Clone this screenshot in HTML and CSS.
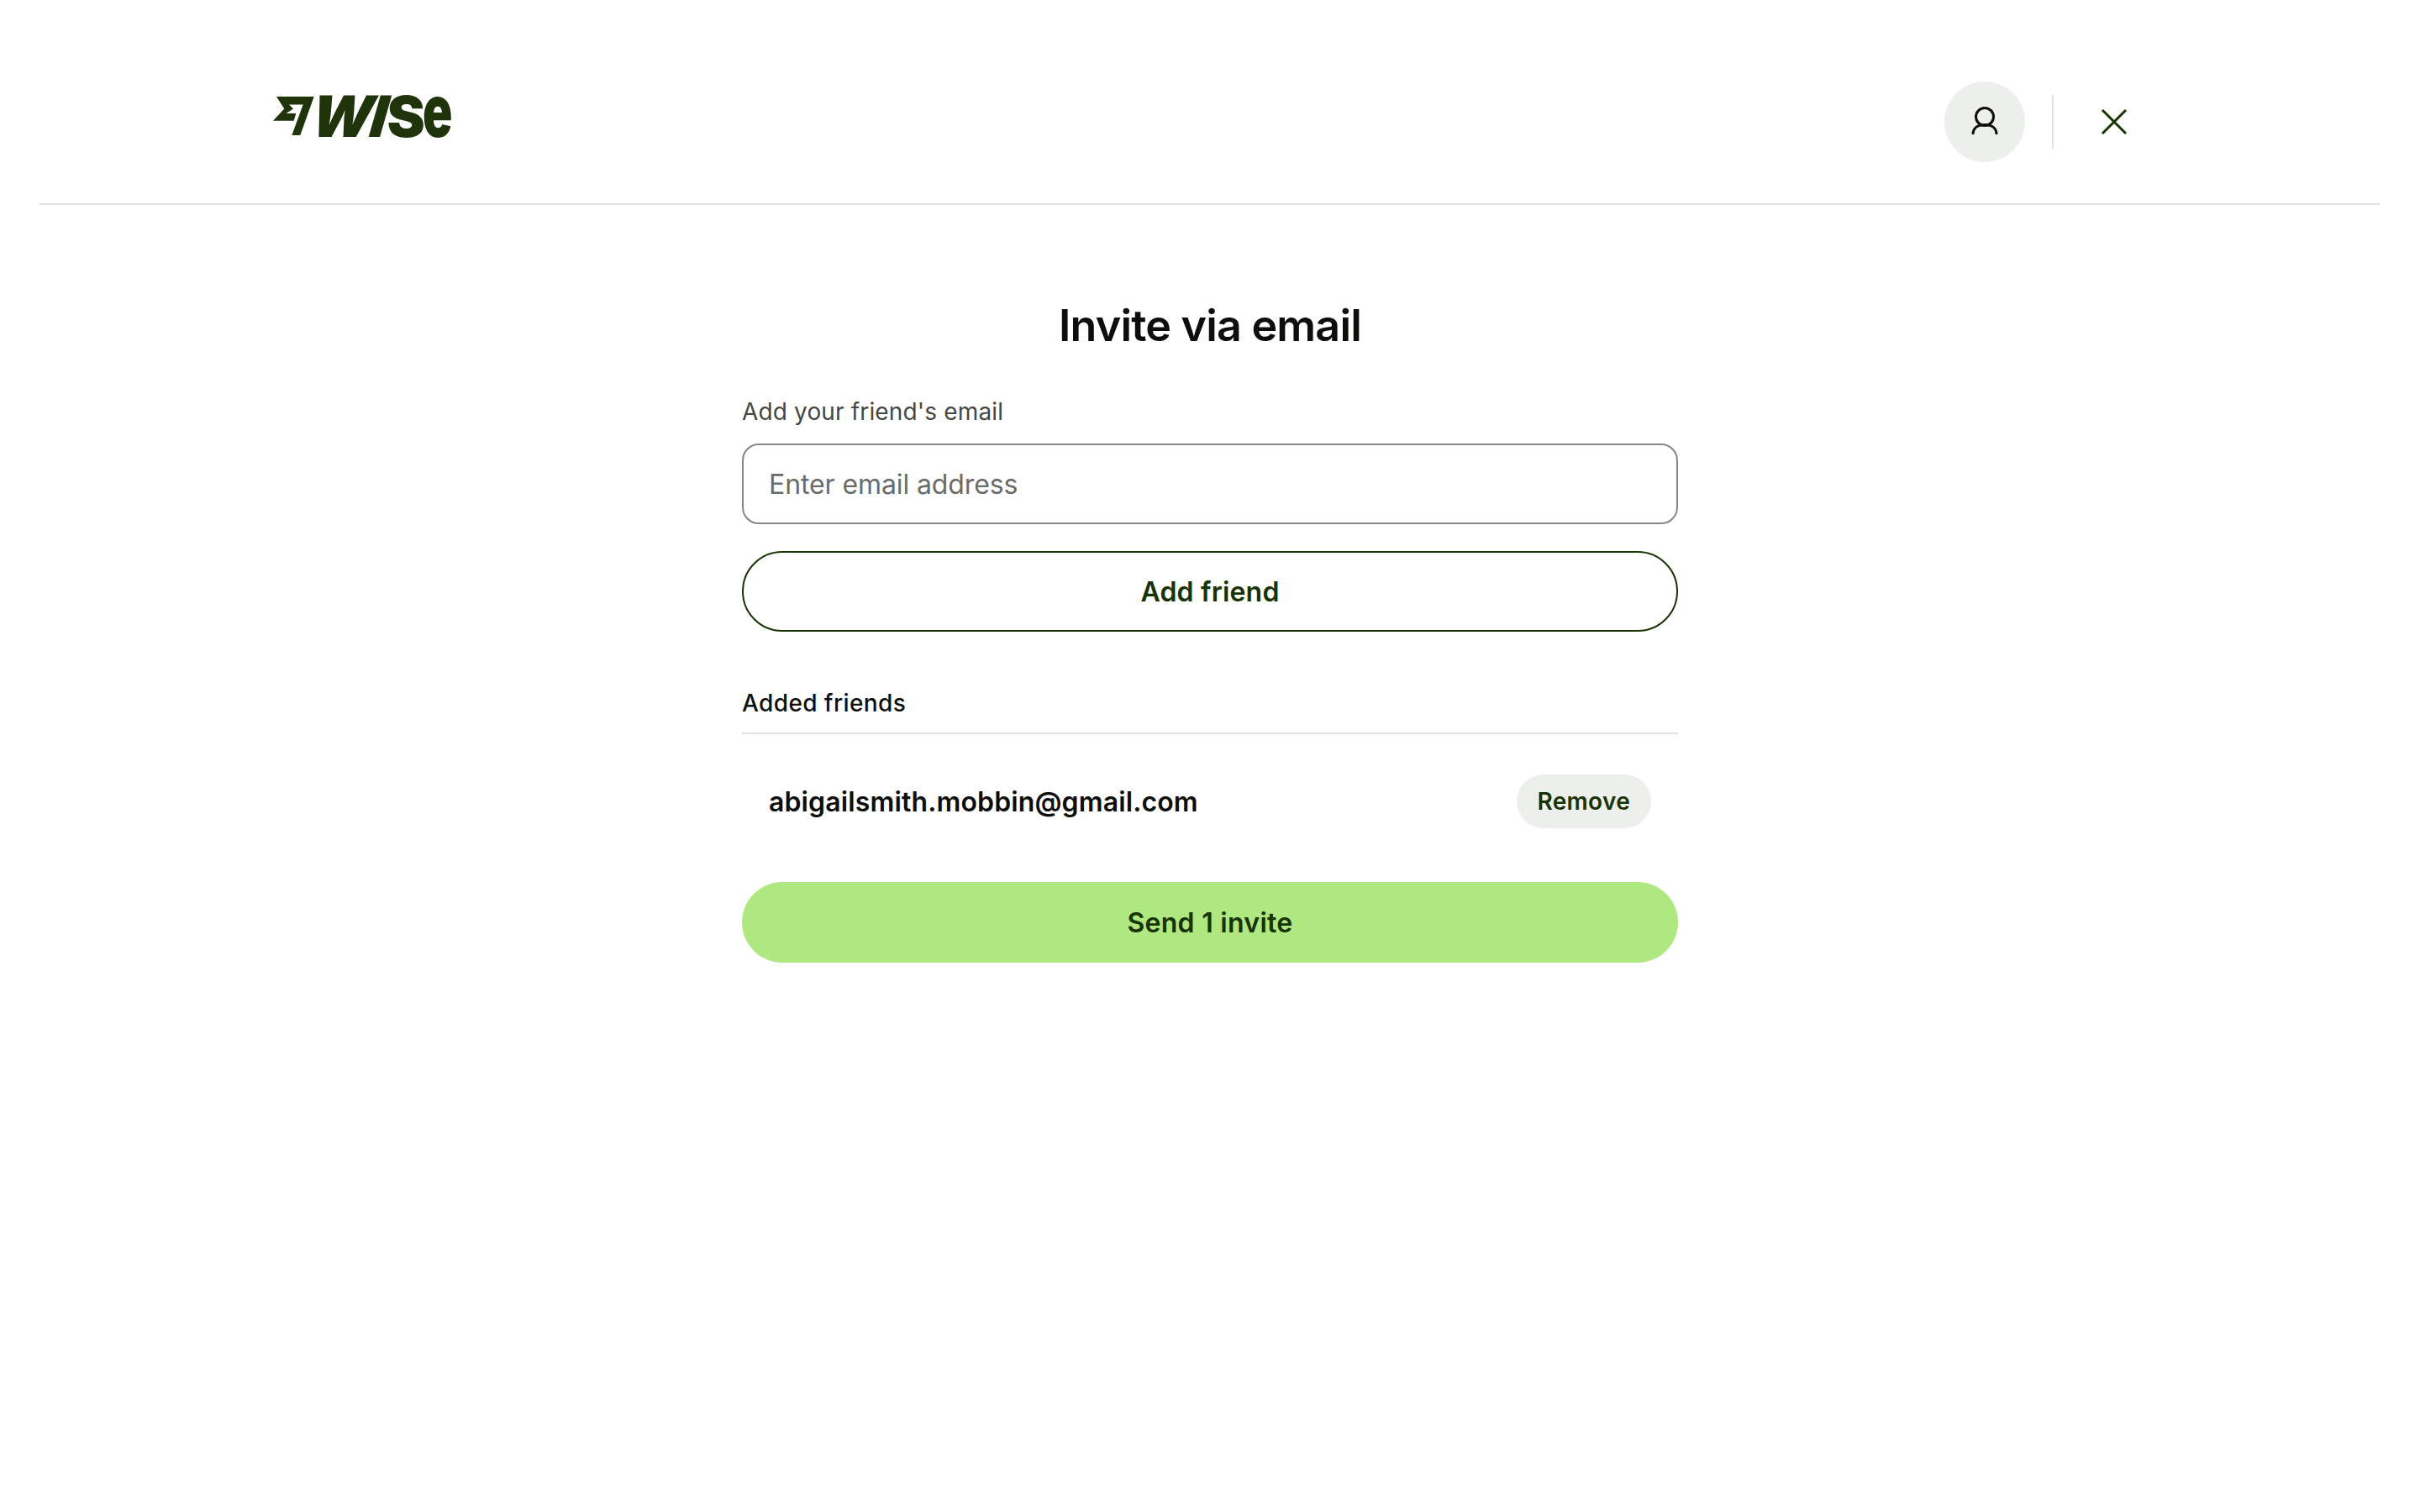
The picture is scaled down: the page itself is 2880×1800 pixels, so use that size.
FILE: index.html
```html
<!DOCTYPE html>
<html lang="en">
<head>
    <meta charset="UTF-8">
    <meta name="viewport" content="width=device-width, initial-scale=1.0">
    <title>Invite via email</title>
    <link rel="stylesheet" href="styles.css">
</head>
<body>
    <header class="topbar">
        <a class="logo" href="#">
            <svg class="logo-flag" width="49" height="46" viewBox="0 0 49 46">
                <path d="M4 0H48.7L32.3 46H22.3L35.7 9.4H19L24 14.4L15.7 20H27.3L24.7 28.7H0L13.3 14.4Z" fill="#1f340b"/>
            </svg>
            <span class="logo-text"><span class="logo-slant">WI</span>S<span class="logo-e">e</span></span>
        </a>
        <div class="topbar-actions">
            <button class="avatar" aria-label="Account">
                <svg width="36" height="36" viewBox="0 0 36 36" fill="none" stroke="#0e0f0c" stroke-width="3">
                    <circle cx="18" cy="12" r="10.5"/>
                    <path d="M4 33C4 25 10 21.5 18 21.5S32 25 32 33"/>
                </svg>
            </button>
            <span class="divider"></span>
            <button class="close" aria-label="Close">
                <svg width="32" height="32" viewBox="0 0 32 32" stroke="#163300" stroke-width="3">
                    <path d="M2 2L30 30M30 2L2 30"/>
                </svg>
            </button>
        </div>
    </header>

    <main class="invite">
        <h1>Invite via email</h1>

        <label class="field-label" for="email">Add your friend's email</label>
        <input class="email-input" type="email" id="email" placeholder="Enter email address">
        <button class="btn btn-outline">Add friend</button>

        <h2 class="friends-title">Added friends</h2>
        <div class="friend-row">
            <span class="friend-email">abigailsmith.mobbin@gmail.com</span>
            <button class="btn-remove">Remove</button>
        </div>

        <button class="btn btn-send">Send 1 invite</button>
    </main>
</body>
</html>
```

FILE: styles.css
```css
body {
    margin: 0;
    background-color: #fff;
    font-family: Inter, "Noto Sans", sans-serif;
    color: #0e0f0c;
}
button {
    font-family: inherit;
    cursor: pointer;
}
.topbar {
    display: flex;
    justify-content: space-between;
    align-items: flex-start;
    margin: 0 48px 0 47px;
    padding: 97px 300px 49px 278px;
    border-bottom: 2px solid #e2e3e1;
}
.logo {
    display: flex;
    align-items: center;
    gap: 0;
    margin-top: 18px;
    height: 46px;
    text-decoration: none;
}
.logo-flag {
    display: block;
}
.logo-text {
    display: flex;
    align-items: baseline;
    margin-top: -7px;
    font-size: 68px;
    line-height: 46px;
    font-weight: 900;
    letter-spacing: -3px;
    color: #1f340b;
}
.logo-slant {
    display: inline-block;
    transform: skewX(-16deg);
    letter-spacing: -3px;
    margin-left: -2px;
    margin-right: 1px;
}
.logo-e {
    display: inline-block;
    font-size: 86px;
    transform: scaleX(0.68);
    transform-origin: left;
    margin-right: -16px;
}
.topbar-actions {
    display: flex;
    align-items: center;
}
.avatar {
    display: flex;
    align-items: center;
    justify-content: center;
    width: 96px;
    height: 96px;
    padding: 0;
    border: none;
    border-radius: 50%;
    background-color: #edefec;
}
.divider {
    width: 2px;
    height: 64px;
    margin: 0 56px 0 32px;
    background-color: #e2e3e1;
}
.close {
    display: flex;
    padding: 0;
    border: none;
    background: none;
}
.invite {
    display: flex;
    flex-direction: column;
    width: 1114px;
    margin: 0 auto;
}
h1 {
    margin: 112px 0 0;
    text-align: center;
    font-size: 52px;
    line-height: 64px;
    font-weight: 600;
    letter-spacing: -0.8px;
}
.field-label {
    margin-top: 52px;
    font-size: 28px;
    line-height: 36px;
    letter-spacing: 0.15px;
    color: #454745;
}
.email-input {
    box-sizing: border-box;
    height: 96px;
    margin-top: 20px;
    padding: 0 30px;
    border: 2px solid #868685;
    border-radius: 20px;
    font-family: inherit;
    font-size: 32px;
    letter-spacing: -0.1px;
}
.email-input::placeholder {
    color: #6a6c6a;
    opacity: 1;
}
.btn {
    box-sizing: border-box;
    height: 96px;
    border-radius: 48px;
    font-size: 32px;
    font-weight: 600;
    letter-spacing: 0.2px;
    color: #163300;
}
.btn-outline {
    margin-top: 32px;
    border: 2px solid #163300;
    background: #fff;
}
.friends-title {
    margin: 67px 0 0;
    padding-bottom: 17px;
    border-bottom: 2px solid #e2e3e1;
    font-size: 28px;
    line-height: 36px;
    font-weight: 500;
    letter-spacing: 0.4px;
}
.friend-row {
    display: flex;
    justify-content: space-between;
    align-items: center;
    margin-top: 48px;
    padding: 0 32px;
}
.friend-email {
    font-size: 32px;
    font-weight: 600;
    letter-spacing: 0.13px;
}
.btn-remove {
    height: 64px;
    padding: 0 25px;
    border: none;
    border-radius: 32px;
    background-color: #edefec;
    font-size: 28px;
    font-weight: 600;
    letter-spacing: 0.3px;
    color: #163300;
}
.btn-send {
    margin-top: 64px;
    border: none;
    background-color: #afe780;
    letter-spacing: 0.28px;
}
```
